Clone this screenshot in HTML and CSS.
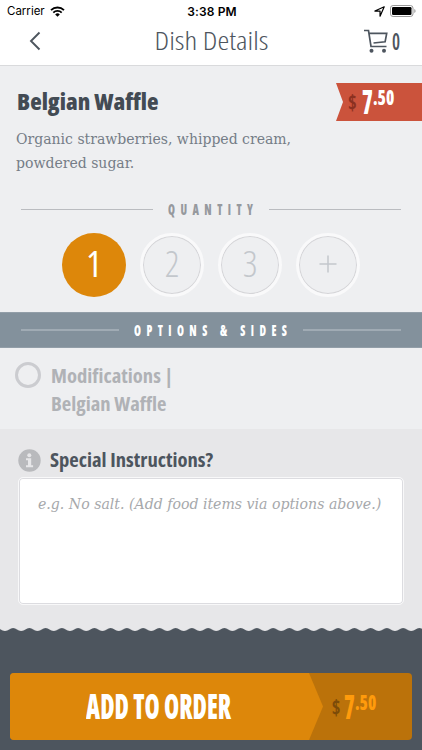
FILE: index.html
```html
<!DOCTYPE html>
<html lang="en">
<head>
  <meta charset="UTF-8">
  <meta name="viewport" content="width=device-width, initial-scale=1">
  <title>Dish Details</title>
  <link rel="stylesheet" href="styles.css">
</head>
<body>
  <header class="top">
    <div class="status">
      <div class="carrier">
        <span>Carrier</span>
        <svg width="15" height="11" viewBox="0 0 15 11">
          <path d="M1 4.2a9.2 9.2 0 0 1 13 0M3.3 6.6a6 6 0 0 1 8.4 0" fill="none" stroke="#000" stroke-width="1.8"/>
          <path d="M5.2 8.4a3.3 3.3 0 0 1 4.6 0L7.5 10.8z"/>
        </svg>
      </div>
      <strong class="clock">3:38 PM</strong>
      <div class="power">
        <svg width="11" height="11" viewBox="0 0 10 10">
          <path d="M9.300 .7L5.500 9.300V4.600H.8z" fill="none" stroke="#000" stroke-width="1.1" stroke-linejoin="round"/>
        </svg>
        <svg width="26" height="12" viewBox="0 0 26 12">
          <rect x=".5" y=".5" width="22.500" height="11" rx="2.6" fill="none" stroke="#999"/>
          <rect x="2" y="2" width="19.500" height="8" rx="1.2"/>
          <path d="M24.300 4v4q1.300-.6 1.300-2t-1.300-2" fill="#999"/>
        </svg>
      </div>
    </div>
    <nav class="nav">
      <svg class="back" width="12" height="20" viewBox="0 0 12 20">
        <path d="M10.500 1.500L2 10l8.500 8.500" fill="none" stroke="#4d555e" stroke-width="1.900"/>
      </svg>
      <h1>Dish Details</h1>
      <div class="cart">
        <svg width="24" height="24" viewBox="0 0 24 24" fill="none" stroke="#4d555e" stroke-width="1.700">
          <path d="M0 1.500h4.500L7 17.500h15.500M5.200 4.300h17.500l-1.600 8.500L9.500 14"/>
          <circle cx="7.500" cy="21.700" r="2" fill="#4d555e" stroke="none"/>
          <circle cx="20" cy="21.700" r="2" fill="#4d555e" stroke="none"/>
        </svg>
        <span class="count">0</span>
      </div>
    </nav>
  </header>

  <section class="dish">
    <div class="dish-head">
      <h2>Belgian Waffle</h2>
      <div class="tag"><span class="cur">$</span><span class="whole">7</span><span class="cents">.50</span></div>
    </div>
    <p class="about">Organic strawberries, whipped cream,<br>powdered sugar.</p>
    <h3 class="rule"><span>QUANTITY</span></h3>
    <div class="qty">
      <button class="on">1</button>
      <button>2</button>
      <button>3</button>
      <button>
        <svg width="18" height="18" viewBox="0 0 18 18"><path d="M9 .5v17M.5 9h17" stroke="#c3c7cc" stroke-width="1.500"/></svg>
      </button>
    </div>
  </section>

  <h3 class="rule sides"><span>OPTIONS &amp; SIDES</span></h3>

  <div class="option">
    <span class="radio"></span>
    <div class="option-name">Modifications |<br>Belgian Waffle</div>
  </div>

  <section class="notes">
    <div class="notes-head">
      <svg width="23" height="23" viewBox="0 0 23 23">
        <circle cx="11.500" cy="11.500" r="11.200" fill="#b9babd"/>
        <circle cx="11.300" cy="6.200" r="2" fill="#e7e7e9"/>
        <path d="M8 9.300h5.200v7h1.900v2H8v-2h2v-5H8z" fill="#e7e7e9"/>
      </svg>
      <h4>Special Instructions?</h4>
    </div>
    <div class="box">e.g. No salt. (Add food items via options above.)</div>
  </section>

  <footer class="bottom">
    <svg class="waves" width="422" height="4" viewBox="0 0 422 4">
      <defs>
        <pattern id="wave" x="5" width="16.250" height="4" patternUnits="userSpaceOnUse">
          <path d="M0 3C3.500 3 5 0 8.125 0S12.750 3 16.250 3V4H0z" fill="#4d555e"/>
        </pattern>
      </defs>
      <rect width="422" height="4" fill="url(#wave)"/>
    </svg>
    <button class="add">
      <span class="add-label"><span>ADD TO ORDER</span></span>
      <span class="add-price"><span class="cur">$</span><span class="whole">7</span><span class="cents">.50</span></span>
    </button>
  </footer>
</body>
</html>
```
FILE: styles.css
```css
* {
  box-sizing: border-box;
}
body {
  margin: 0;
  width: 422px;
  height: 750px;
  overflow: hidden;
  display: flex;
  flex-direction: column;
  background: #eeeff1;
  color: #4d555e;
  font-family: "Open Sans", sans-serif;
  font-stretch: 75%;
  white-space: nowrap;
}
h1, h2, h3, h4, p {
  margin: 0;
}
button {
  border: 0;
  padding: 0;
  font: inherit;
}
svg {
  display: block;
  flex: none;
}

/* status bar + nav */
.top {
  height: 66px;
  background: #fff;
  border-bottom: 1px solid #d9dadc;
}
.status {
  display: grid;
  grid-template-columns: 1fr auto 1fr;
  align-items: center;
  height: 22px;
  padding: 0 6px 0 8px;
  font: 11.500px Inter, sans-serif;
  color: #000;
}
.carrier, .power {
  display: flex;
  align-items: center;
  gap: 5px;
}
.carrier {
  margin-left: -1px;
}
.clock {
  font-size: 12px;
  font-weight: 600;
  letter-spacing: 0.150px;
}
.power {
  justify-content: flex-end;
  gap: 5px;
}
.nav {
  display: grid;
  grid-template-columns: 1fr auto 1fr;
  align-items: center;
  height: 36px;
  padding: 0 21px;
}
.back {
  margin: 1px 0 0 8px;
}
h1 {
  font-size: 26px;
  font-weight: 300;
  line-height: 36px;
  transform: scaleX(1.15);
}
.cart {
  display: flex;
  justify-content: flex-end;
  align-items: center;
  gap: 4px;
  margin-top: 2px;
}
.count {
  width: 9px;
  font-size: 24px;
  font-weight: 600;
  line-height: 26px;
  transform: scaleX(0.75);
  transform-origin: left;
}

/* dish */
.dish {
  height: 246px;
}
.dish-head {
  display: flex;
  justify-content: space-between;
  padding: 17px 0 0 17px;
  height: 61px;
}
h2, h4, .option-name {
  transform: scaleX(1.03);
  transform-origin: left;
}
h2 {
  font-size: 23px;
  font-weight: 800;
  line-height: 36px;
  color: #434b54;
}
.tag {
  width: 86px;
  height: 38px;
  padding-left: 12px;
  background: #cb533c;
  clip-path: polygon(0 0, 100% 0, 100% 100%, 0 100%, 7px 50%);
  color: #fff;
}
.tag, .add-price {
  display: flex;
  font-weight: 800;
}
.cur, .whole, .cents {
  transform-origin: left;
}
.cur {
  width: 14px;
  font-size: 21px;
  font-weight: 700;
  line-height: 38px;
  color: #8b3020;
  transform: scaleX(0.88);
}
.whole {
  width: 11px;
  font-size: 33px;
  line-height: 37px;
  transform: scaleX(0.66);
}
.cents {
  font-size: 21px;
  line-height: 29px;
  transform: scaleX(0.8);
}
.about {
  padding-left: 16px;
  height: 69px;
  font: 15.600px/24px "DejaVu Serif", serif;
  font-stretch: 75%;
  color: #757d87;
}
.rule {
  display: flex;
  align-items: center;
  gap: 15px;
  height: 26px;
  padding: 0 21px;
  font-size: 16.500px;
  font-weight: 800;
  letter-spacing: 8px;
  color: #96999e;
}
.rule span {
  width: 86px;
  margin-top: -2px;
  transform: scaleX(0.68);
  transform-origin: left;
}
.rule::before, .rule::after {
  content: "";
  flex: 1;
  height: 1px;
  background: #babcc0;
}
.qty {
  display: flex;
  justify-content: center;
  gap: 14px;
  padding-top: 11px;
}
.qty button {
  display: flex;
  align-items: center;
  justify-content: center;
  width: 64px;
  height: 64px;
  border: 3px solid #f9f9fa;
  border-radius: 50%;
  box-shadow: inset 0 0 0 1px #d5d5d8;
  background: #eeeff1;
  color: #c3c7cc;
  font-size: 36px;
  font-weight: 300;
  line-height: 56px;
  padding-bottom: 2px;
}
.qty .on {
  border: 0;
  box-shadow: none;
  background: #dd870a;
  color: #fff;
  font-weight: 400;
}
.sides {
  height: 36px;
  background: #83919c;
  border-top: 1px solid #929ea8;
  border-bottom: 1px solid #929ea8;
  color: #fff;
}
.sides span {
  width: 154px;
}
.sides::before, .sides::after {
  height: 2px;
  background: #a0abb4;
}

/* option row */
.option {
  display: flex;
  gap: 10px;
  height: 81px;
  padding: 14px 15px;
}
.radio {
  width: 26px;
  height: 26px;
  border: 3px solid #cbccd0;
  border-radius: 50%;
}
.option-name {
  font-size: 20px;
  font-weight: 700;
  line-height: 28px;
  color: #b0b2b6;
}

/* special instructions */
.notes {
  flex: 1;
  padding: 17px 18px 0;
  background: #e7e7e9;
}
.notes-head {
  display: flex;
  align-items: center;
  gap: 9px;
  height: 28px;
}
h4 {
  font-size: 20px;
  line-height: 28px;
}
.box {
  height: 128px;
  margin-top: 3px;
  padding: 15px 19px;
  background: #fff;
  border: 1px solid #f8f8f9;
  border-radius: 5px;
  box-shadow: inset 0 0 0 1px #dcdce0;
  font: italic 15.700px/22px "DejaVu Serif", serif;
  font-stretch: 75%;
  color: #a6a8ab;
}

/* footer */
.bottom {
  display: flex;
  flex-direction: column;
  height: 122px;
  background: linear-gradient(#e7e7e9 4px, #4d555e 4px);
}
.add {
  display: flex;
  width: 402px;
  height: 67px;
  margin: 41px 0 0 10px;
  border-radius: 4px;
  overflow: hidden;
  background: #bb720a;
}
.add-label {
  display: flex;
  justify-content: center;
  width: 313px;
  height: 67px;
  padding-right: 15px;
  background: #dd870a;
  clip-path: polygon(0 0, 299px 0, 100% 50%, 299px 100%, 0 100%);
  color: #fff;
  font-size: 36px;
  font-weight: 800;
  line-height: 66px;
}
.add-label span {
  transform: scaleX(0.68);
}
.add-price {
  padding: 15px 0 0 7px;
  color: #ff9b0c;
}
.add-price .cur {
  color: #7c4b08;
}
```
